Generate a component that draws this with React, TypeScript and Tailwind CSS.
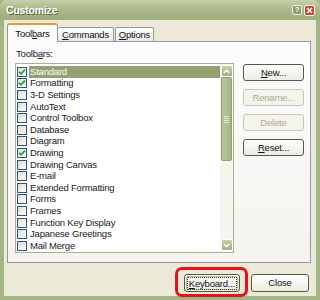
import React from "react";

const items: { label: React.ReactNode; checked: boolean }[] = [
  { label: "Standard", checked: true },
  { label: "Formatting", checked: true },
  { label: "3-D Settings", checked: false },
  { label: "AutoText", checked: false },
  { label: "Control Toolbox", checked: false },
  { label: "Database", checked: false },
  { label: "Diagram", checked: false },
  { label: "Drawing", checked: true },
  { label: "Drawing Canvas", checked: false },
  { label: "E-mail", checked: false },
  { label: "Extended Formatting", checked: false },
  { label: "Forms", checked: false },
  { label: "Frames", checked: false },
  { label: "Function Key Display", checked: false },
  { label: "Japanese Greetings", checked: false },
  { label: "Mail Merge", checked: false },
];

function Check({ checked }: { checked: boolean }) {
  return (
    <span className="w-[10px] h-[10px] shrink-0 border border-[#2a5580] bg-gradient-to-br from-[#dcdcd5] to-white flex items-center justify-center">
      {checked && (
        <svg width="8" height="8" viewBox="0 0 8 8">
          <path d="M1 3.8 L3 5.8 L7 1.6" fill="none" stroke="#21a121" strokeWidth="1.7" />
        </svg>
      )}
    </span>
  );
}

function Btn({
  children,
  disabled,
  w,
}: {
  children: React.ReactNode;
  disabled?: boolean;
  w: string;
}) {
  return (
    <div
      className={`${w} h-[17px] rounded-[3px] border flex items-center justify-center ${
        disabled
          ? "border-[#c9c7ba] bg-[#f5f4ea] text-[#aca899]"
          : "border-[#4f5d40] bg-gradient-to-b from-white to-[#ecebe2] text-[#111]"
      }`}
    >
      {children}
    </div>
  );
}

export default function App() {
  return (
    <div
      className="w-[320px] h-[300px] relative flex flex-col bg-[#a3b485] text-[9.5px] leading-[12px] tracking-[-0.2px]"
      style={{ fontFamily: '"Liberation Sans", Arial, sans-serif' }}
    >
      {/* Title bar */}
      <div className="h-[20px] shrink-0 flex items-center pl-[6px] pr-[5px] bg-gradient-to-b from-[#c6d1a8] via-[#a9b888] to-[#9dad7b] rounded-t-[6px]">
        <span className="text-white font-bold text-[10.5px] [text-shadow:1px_1px_0_#56643c] tracking-[-0.2px]">
          Customize
        </span>
        <div className="ml-auto flex gap-[2px] items-center">
          <div className="w-[10px] h-[10px] rounded-[2px] border border-[#eef2e4] bg-[#8c9b6c] flex items-center justify-center text-white text-[8px] font-bold leading-none">
            ?
          </div>
          <div className="w-[11px] h-[11px] rounded-[2px] border border-white bg-[#c4462c] flex items-center justify-center">
            <svg width="7" height="7" viewBox="0 0 7 7">
              <path d="M1 1 L6 6 M6 1 L1 6" stroke="white" strokeWidth="1.6" />
            </svg>
          </div>
        </div>
      </div>

      {/* Body */}
      <div className="flex-1 mx-[4px] mb-[4px] bg-[#ece9d8] flex flex-col">
        {/* Tabs */}
        <div className="h-[21px] shrink-0 flex items-end pl-[3px] relative z-10">
          <div className="w-[51px] h-[19px] -mb-[1px] bg-[#fcfcfb] border border-[#919b9c] border-b-0 rounded-t-[3px] border-t-[2px] border-t-[#e79c3c] flex items-center justify-center text-[#111]">
            <span>Tool<u>b</u>ars</span>
          </div>
          <div className="w-[56px] h-[14px] bg-gradient-to-b from-white to-[#ecebe6] border border-[#919b9c] border-b-0 border-l-0 rounded-t-[2px] flex items-center justify-center text-[#111]">
            <span><u>C</u>ommands</span>
          </div>
          <div className="w-[39px] h-[14px] ml-[1px] bg-gradient-to-b from-white to-[#ecebe6] border border-[#919b9c] border-b-0 rounded-t-[2px] flex items-center justify-center text-[#111]">
            <span><u>O</u>ptions</span>
          </div>
        </div>

        {/* Panel */}
        <div className="ml-[3px] w-[304px] h-[222px] border border-[#919b9c] bg-gradient-to-b from-[#fcfcfe] to-[#f4f3ee] flex flex-col">
          <div className="pl-[8px] mt-[6px] h-[14px] text-[#222]">
            Toolb<u>a</u>rs:
          </div>
          <div className="flex pl-[7px] mt-[1px]">
            {/* List */}
            <div className="w-[219px] h-[190px] border border-[#a5b297] bg-white flex">
              <div className="flex-1 pt-[2px] flex flex-col">
                {items.map((it, i) => (
                  <div key={i} className="h-[11.6px] flex items-center pl-[1px]">
                    <Check checked={it.checked} />
                    <span
                      className={`ml-[2px] flex-1 h-full flex items-center pl-[1px] ${
                        i === 0 ? "bg-[#93a070] text-white" : "text-[#222]"
                      }`}
                    >
                      {it.label}
                    </span>
                  </div>
                ))}
              </div>
              {/* Scrollbar */}
              <div className="w-[13px] h-full bg-[#f6f5ee] flex flex-col items-center pt-[1px] pb-[1px]">
                <div className="w-[12px] h-[12px] rounded-[2px] border border-white bg-gradient-to-b from-[#c3cfaa] to-[#9fb083] flex items-center justify-center">
                  <svg width="7" height="5" viewBox="0 0 7 5">
                    <path d="M0.8 4 L3.5 1.3 L6.2 4" fill="none" stroke="white" strokeWidth="1.5" />
                  </svg>
                </div>
                <div className="w-[11px] h-[84px] rounded-[2px] border border-[#8fa070] bg-gradient-to-r from-[#b8c79c] to-[#a4b586] flex flex-col items-center justify-center gap-[1px]">
                  <div className="w-[5px] h-[1px] bg-[#e4ebd6]" />
                  <div className="w-[5px] h-[1px] bg-[#e4ebd6]" />
                  <div className="w-[5px] h-[1px] bg-[#e4ebd6]" />
                  <div className="w-[5px] h-[1px] bg-[#e4ebd6]" />
                </div>
                <div className="flex-1" />
                <div className="w-[12px] h-[12px] rounded-[2px] border border-white bg-gradient-to-b from-[#c3cfaa] to-[#9fb083] flex items-center justify-center">
                  <svg width="7" height="5" viewBox="0 0 7 5">
                    <path d="M0.8 1 L3.5 3.7 L6.2 1" fill="none" stroke="white" strokeWidth="1.5" />
                  </svg>
                </div>
              </div>
            </div>
            {/* Buttons */}
            <div className="ml-[9px] mt-[1px] flex flex-col gap-[8px]">
              <Btn w="w-[61px]">
                <span><u>N</u>ew...</span>
              </Btn>
              <Btn w="w-[61px]" disabled>
                Rename...
              </Btn>
              <Btn w="w-[61px]" disabled>
                Delete
              </Btn>
              <Btn w="w-[61px]">
                <span><u>R</u>eset...</span>
              </Btn>
            </div>
          </div>
        </div>

        {/* Bottom buttons */}
        <div className="flex justify-end gap-[11px] pr-[7px] mt-[11px]">
          <div className="w-[56px] h-[18px] rounded-[3px] border border-[#4f5d40] bg-gradient-to-b from-white to-[#ecebe2] p-[1px]">
            <div className="w-full h-full rounded-[2px] border border-[#b4c58f] flex items-center justify-center">
              <span className="outline outline-1 outline-dotted outline-[#444] px-[1px] leading-[11px] text-[#111]">
                <u>K</u>eyboard...
              </span>
            </div>
          </div>
          <div className="w-[58px] h-[18px] rounded-[3px] border border-[#4f5d40] bg-gradient-to-b from-white to-[#ecebe2] flex items-center justify-center text-[#111]">
            Close
          </div>
        </div>
      </div>

      {/* Red annotation */}
      <div className="absolute left-[175px] top-[267px] w-[73px] h-[30px] border-[3px] border-[#e8101a] rounded-[7px]" />
    </div>
  );
}
